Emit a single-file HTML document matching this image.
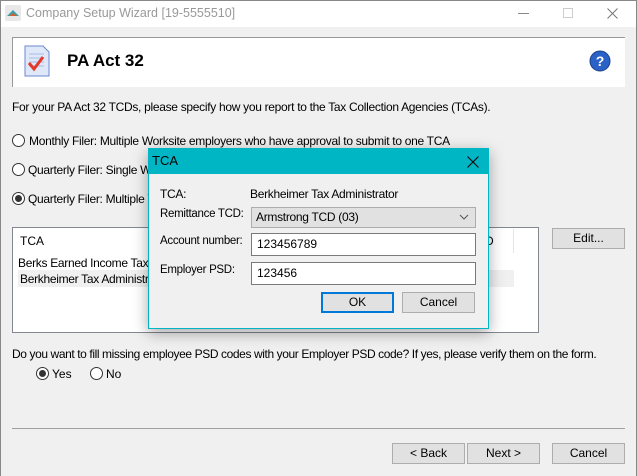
<!DOCTYPE html>
<html><head><meta charset="utf-8"><style>
*{box-sizing:border-box;margin:0;padding:0}
body{width:637px;height:476px;background:#f0f0f0;font-family:"Liberation Sans",sans-serif;font-size:12px;color:#000;position:relative;overflow:hidden}
.a{position:absolute}
.btn{position:absolute;background:#e1e1e1;border:1px solid #adadad;text-align:center;line-height:18px;font-size:12px}
.rad{position:absolute;width:13px;height:13px;border:1px solid #333;border-radius:50%;background:#fff}
.rad.on::after{content:"";position:absolute;left:2px;top:2px;width:7px;height:7px;border-radius:50%;background:#333}
.inp{position:absolute;background:#fff;border:1px solid #7a7a7a;padding-left:5px;line-height:20px}
.lb{letter-spacing:-0.3px}
</style></head><body>
<div class="a" style="left:0;top:0;width:637px;height:27px;background:#fff;border:1px solid #888;border-bottom:none"></div>
<svg class="a" style="left:5px;top:5px" width="16" height="16"><rect width="16" height="16" rx="2" fill="#e8e8e8"/><path d="M2 11 L8 5 L14 11 Z" fill="#3aa0b0"/><path d="M4 11 L8 8 L12 11Z" fill="#d06030"/></svg>
<div class="a" style="left:26px;top:6px;color:#999;font-size:12.5px">Company Setup Wizard [19-5555510]</div>
<div class="a" style="left:518px;top:13px;width:11px;height:1px;background:#888"></div>
<div class="a" style="left:563px;top:8px;width:10px;height:10px;border:1px solid #ccc"></div>
<svg class="a" style="left:607px;top:8px" width="11" height="11"><path d="M0.5 0.5L10.5 10.5M10.5 0.5L0.5 10.5" stroke="#777" stroke-width="1"/></svg>
<div class="a" style="left:0;top:27px;width:1px;height:449px;background:#888"></div>
<div class="a" style="left:636px;top:27px;width:1px;height:449px;background:#888"></div>
<div class="a" style="left:12px;top:37px;width:613px;height:50px;background:#fff;border-top:1px solid #999;border-left:1px solid #999"></div>
<svg class="a" style="left:24px;top:45px" width="26" height="32"><path d="M1 1H19L25 7V31H1Z" fill="#dfe8f8" stroke="#6a8ad0"/><path d="M5 9H20M5 13H20M5 17H20M5 21H20" stroke="#a8bde6"/><path d="M5 18L10 24L19 12" stroke="#e53a2a" stroke-width="3" fill="none"/></svg>
<div class="a" style="left:67px;top:51px;font-size:17px;font-weight:bold">PA Act 32</div>
<svg class="a" style="left:589px;top:50px" width="22" height="22"><circle cx="11" cy="11" r="10" fill="#2a62c8" stroke="#1a3f8a"/><text x="11" y="16" text-anchor="middle" fill="#fff" font-weight="bold" font-size="14" font-family="Liberation Sans">?</text></svg>
<div class="a lb" style="left:12px;top:100px">For your PA Act 32 TCDs, please specify how you report to the Tax Collection Agencies (TCAs).</div>
<div class="rad" style="left:12px;top:134px"></div><div class="a lb" style="left:29px;top:134px">Monthly Filer: Multiple Worksite employers who have approval to submit to one TCA</div>
<div class="rad" style="left:12px;top:163px"></div><div class="a lb" style="left:28px;top:163px">Quarterly Filer: Single Worksite</div>
<div class="rad on" style="left:12px;top:192px"></div><div class="a lb" style="left:28px;top:192px">Quarterly Filer: Multiple Worksite</div>
<div class="a" style="left:12px;top:227px;width:527px;height:106px;background:#fff;border:1px solid #828790"></div>
<div class="a" style="left:20px;top:234px">TCA</div>
<div class="a" style="left:485px;top:234px">D</div>
<div class="a" style="left:513px;top:229px;width:1px;height:24px;background:#e5e5e5"></div>
<div class="a lb" style="left:18px;top:256px">Berks Earned Income Tax Bureau</div>
<div class="a" style="left:18px;top:270px;width:496px;height:17px;background:#f0f0f0"></div>
<div class="a lb" style="left:20px;top:272px">Berkheimer Tax Administrator</div>
<div class="btn" style="left:552px;top:228px;width:73px;height:21px">Edit...</div>
<!-- dialog -->
<div class="a" style="left:148px;top:148px;width:341px;height:181px;background:#f0f0f0;border:1px solid #00b4c4;box-shadow:0 4px 14px rgba(0,0,0,.35)"></div>
<div class="a" style="left:148px;top:148px;width:341px;height:26px;background:#00b5c4"></div>
<div class="a" style="left:152px;top:153px;font-size:13px">TCA</div>
<svg class="a" style="left:467px;top:156px" width="12" height="12"><path d="M0.5 0.5L11.5 11.5M11.5 0.5L0.5 11.5" stroke="#111" stroke-width="1.2"/></svg>
<div class="a lb" style="left:160px;top:187px">TCA:</div>
<div class="a lb" style="left:250px;top:187px">Berkheimer Tax Administrator</div>
<div class="a lb" style="left:160px;top:208px;font-size:11.5px">Remittance TCD:</div>
<div class="a lb" style="left:251px;top:207px;width:225px;height:21px;background:#e1e1e1;border:1px solid #adadad;padding-left:4px;line-height:19px">Armstrong TCD (03)</div>
<svg class="a" style="left:459px;top:213px" width="10" height="8"><path d="M1 2L5 6L9 2" stroke="#555" fill="none"/></svg>
<div class="a lb" style="left:160px;top:235px;font-size:11.5px">Account number:</div>
<div class="inp" style="left:251px;top:233px;width:225px;height:23px">123456789</div>
<div class="a lb" style="left:160px;top:264px;font-size:11.5px">Employer PSD:</div>
<div class="inp" style="left:251px;top:262px;width:225px;height:23px">123456</div>
<div class="btn" style="left:321px;top:292px;width:73px;height:21px;border:2px solid #0078d7;line-height:17px">OK</div>
<div class="btn" style="left:402px;top:292px;width:73px;height:21px">Cancel</div>
<!-- bottom -->
<div class="a" style="left:12px;top:347px;letter-spacing:-0.4px">Do you want to fill missing employee PSD codes with your Employer PSD code? If yes, please verify them on the form.</div>
<div class="rad on" style="left:36px;top:367px"></div><div class="a" style="left:52px;top:367px">Yes</div>
<div class="rad" style="left:90px;top:367px"></div><div class="a" style="left:106px;top:367px">No</div>
<div class="a" style="left:12px;top:428px;width:613px;height:1px;background:#a0a0a0"></div>
<div class="btn" style="left:392px;top:443px;width:73px;height:21px">&lt; Back</div>
<div class="btn" style="left:467px;top:443px;width:73px;height:21px">Next &gt;</div>
<div class="btn" style="left:552px;top:443px;width:73px;height:21px">Cancel</div>
</body></html>
